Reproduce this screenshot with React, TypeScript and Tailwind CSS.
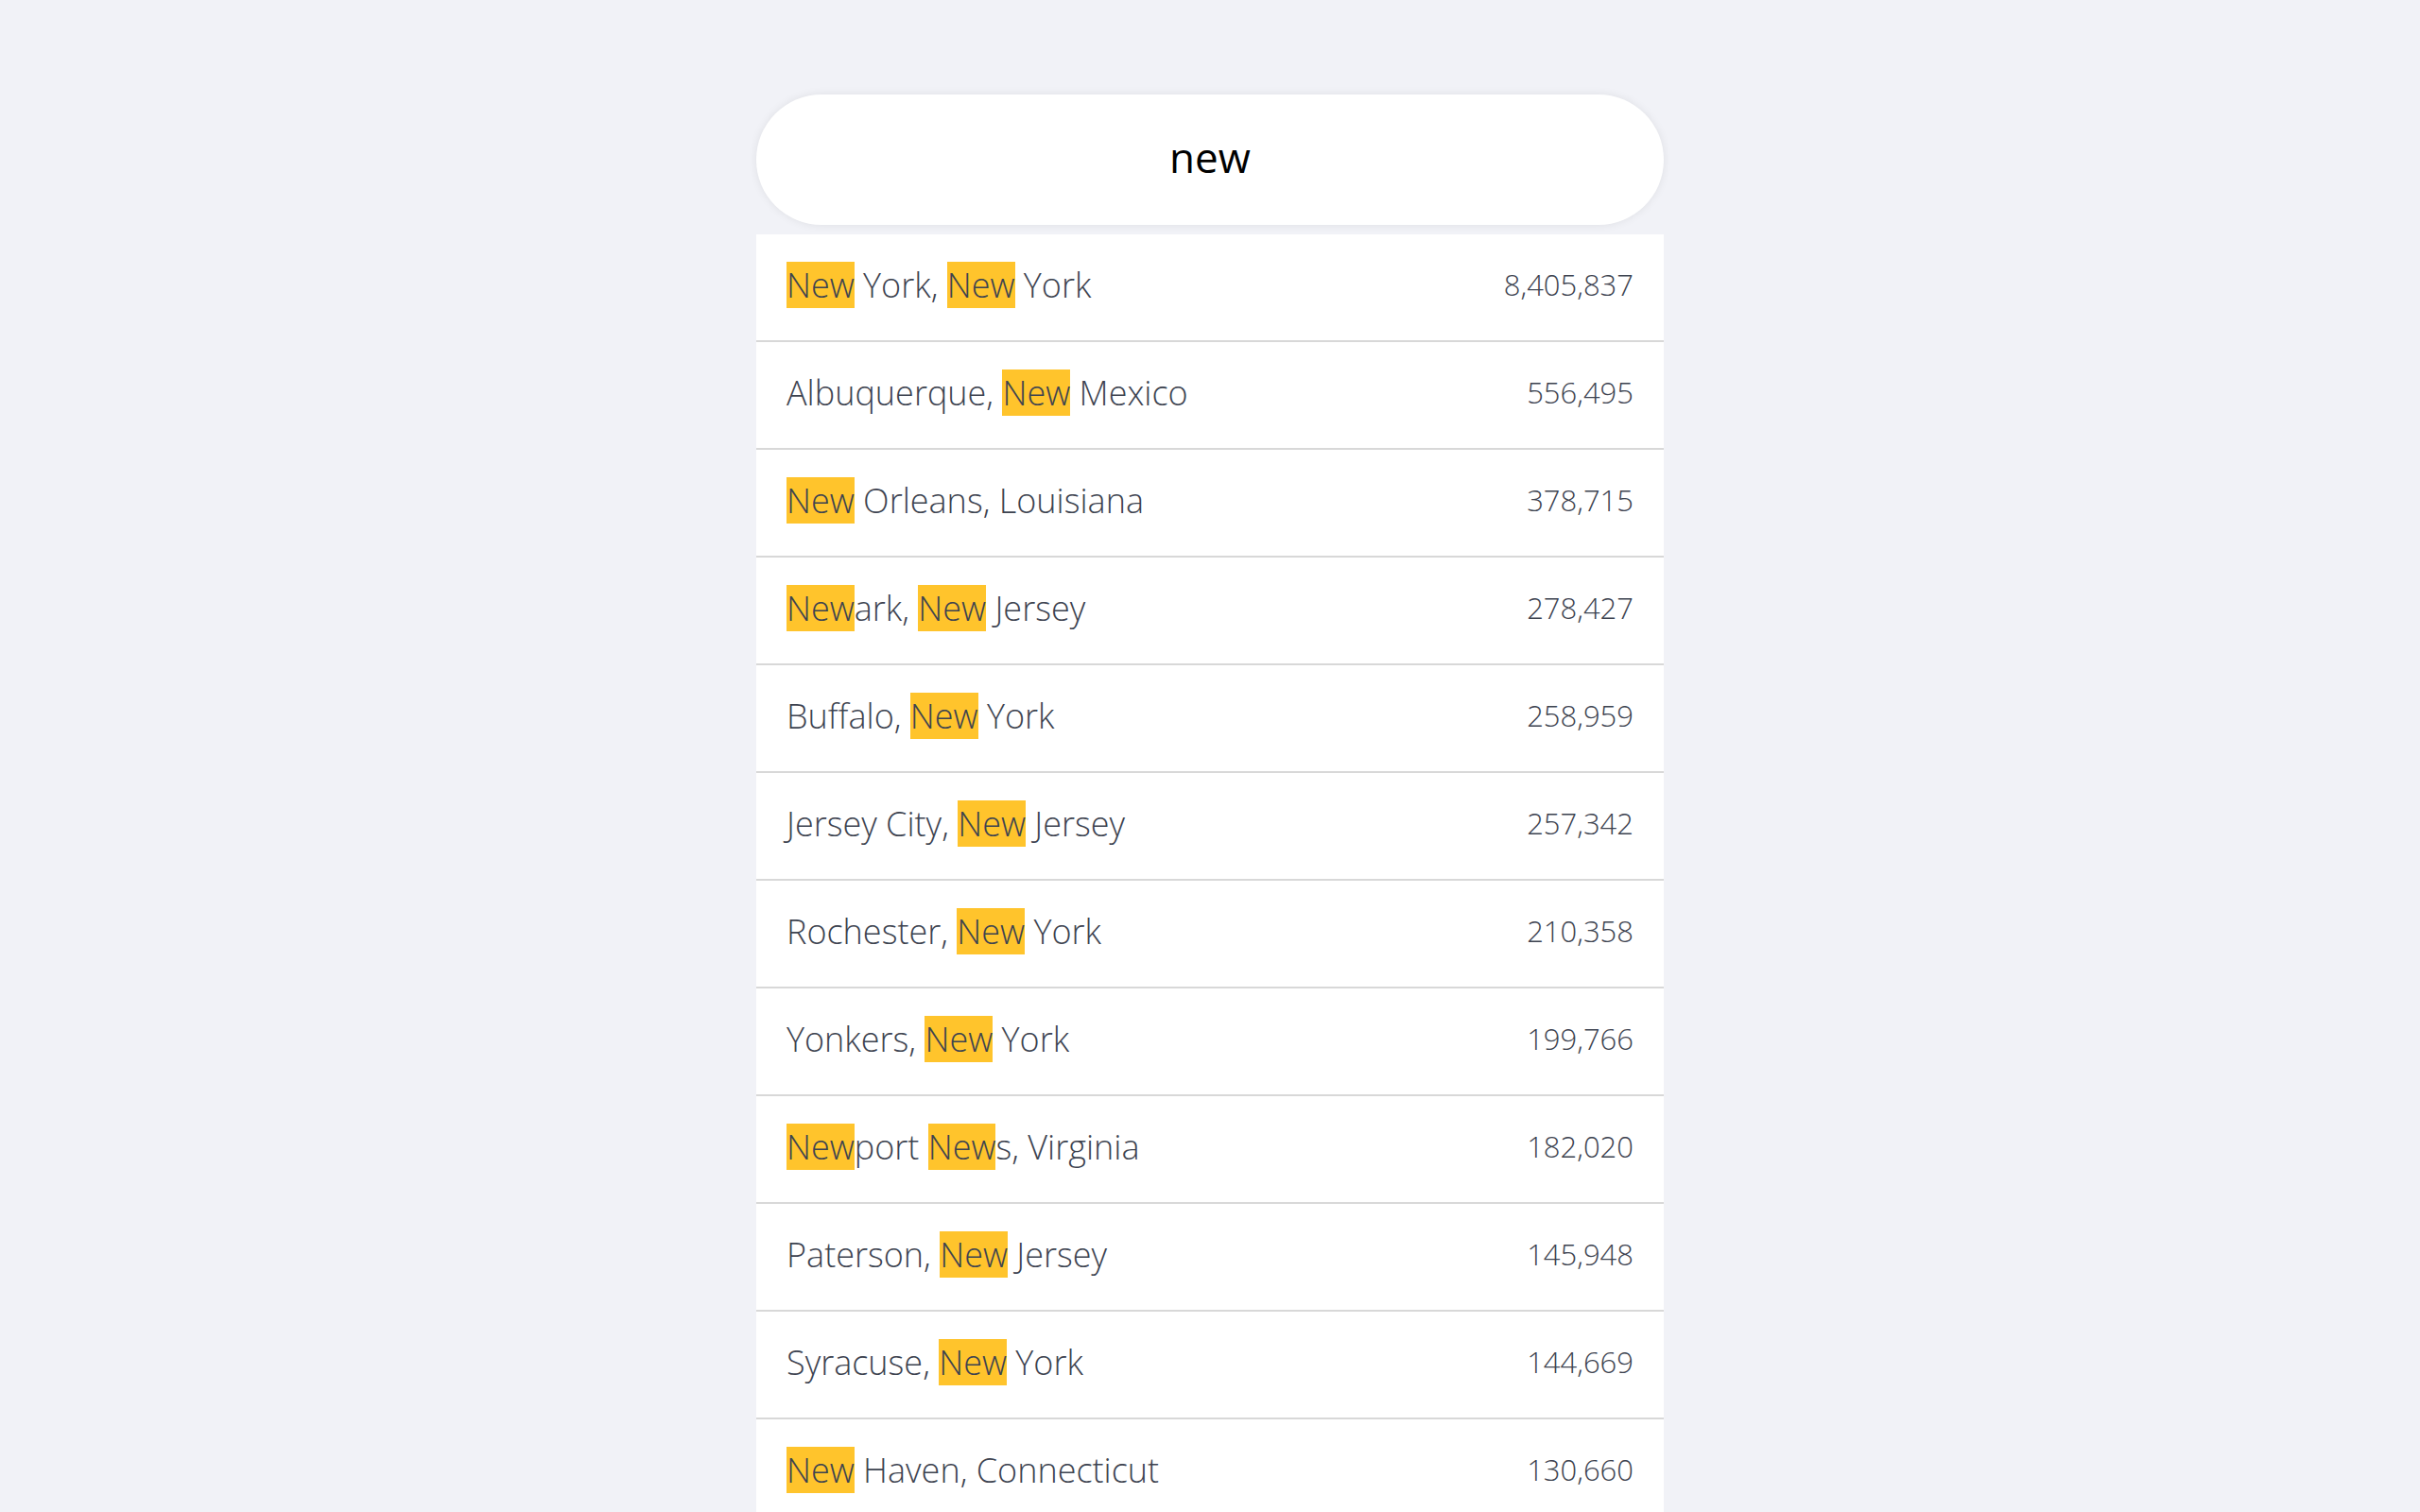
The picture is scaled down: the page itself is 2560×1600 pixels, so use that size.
import React from "react";

const query = "new";

const cities = [
  { name: "New York, New York", population: "8,405,837" },
  { name: "Albuquerque, New Mexico", population: "556,495" },
  { name: "New Orleans, Louisiana", population: "378,715" },
  { name: "Newark, New Jersey", population: "278,427" },
  { name: "Buffalo, New York", population: "258,959" },
  { name: "Jersey City, New Jersey", population: "257,342" },
  { name: "Rochester, New York", population: "210,358" },
  { name: "Yonkers, New York", population: "199,766" },
  { name: "Newport News, Virginia", population: "182,020" },
  { name: "Paterson, New Jersey", population: "145,948" },
  { name: "Syracuse, New York", population: "144,669" },
  { name: "New Haven, Connecticut", population: "130,660" },
];

// split the name into plain and matched parts
function Highlighted({ text }: { text: string }) {
  const parts = text.split(new RegExp(`(${query})`, "gi"));
  return (
    <>
      {parts.map((part, i) =>
        part.toLowerCase() === query ? (
          <span key={i} className="bg-[#ffc42c]">
            {part}
          </span>
        ) : (
          <span key={i}>{part}</span>
        )
      )}
    </>
  );
}

export default function App() {
  return (
    <div className="min-h-screen bg-[#f1f2f7] font-['Open_Sans',sans-serif]">
      <div className="w-[960px] mx-auto pt-[100px]">
        <input
          type="text"
          defaultValue={query}
          className="w-full h-[138px] pb-[6px] rounded-full bg-white text-center text-[44px] text-black outline-none shadow-[0_0_10px_rgba(0,0,0,0.08)]"
        />
        <ul className="mt-[10px]">
          {cities.map((city) => (
            <li
              key={city.name}
              className="flex items-center justify-between h-[114px] px-8 pb-[5px] bg-white border-b-2 border-[#d8d8d8] text-[#3d4350] font-light"
            >
              <span className="text-[36px] leading-[48px] whitespace-pre">
                <Highlighted text={city.name} />
              </span>
              <span className="text-[31px]">{city.population}</span>
            </li>
          ))}
        </ul>
      </div>
    </div>
  );
}
